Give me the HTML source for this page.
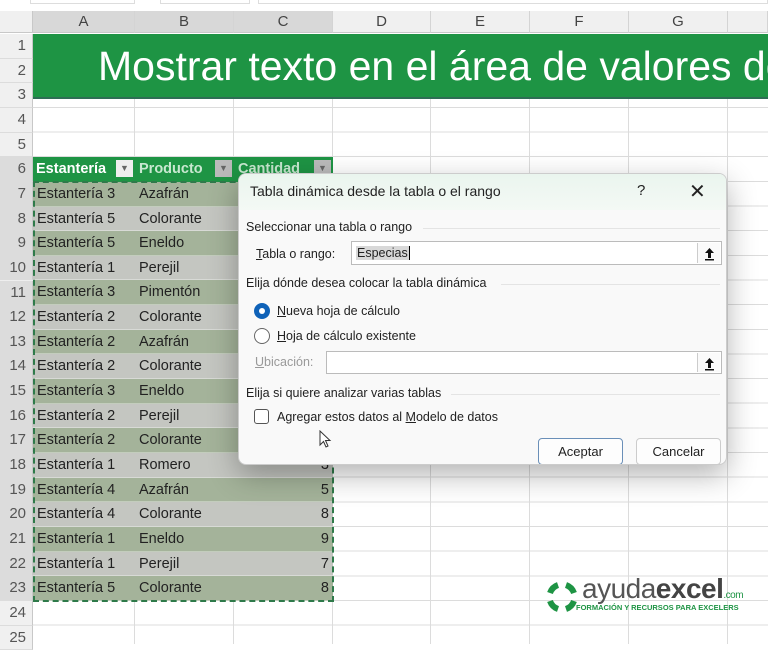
<!DOCTYPE html>
<html><head><meta charset="utf-8"><style>
*{margin:0;padding:0;box-sizing:border-box}
body{width:768px;height:637px;overflow:hidden;background:#fff;position:relative;font-family:"Liberation Sans",sans-serif}
.abs{position:absolute}
.grid{position:absolute;left:0;top:34px;width:768px;height:610px;
background-image:repeating-linear-gradient(to bottom,transparent 0,transparent 23.65px,#dcdcdc 23.65px,#dcdcdc 24.65px),
linear-gradient(to right,transparent 134px,#dcdcdc 134px,#dcdcdc 135px,transparent 135px,transparent 233px,#dcdcdc 233px,#dcdcdc 234px,transparent 234px,transparent 332px,#dcdcdc 332px,#dcdcdc 333px,transparent 333px,transparent 430px,#dcdcdc 430px,#dcdcdc 431px,transparent 431px,transparent 529px,#dcdcdc 529px,#dcdcdc 530px,transparent 530px,transparent 628px,#dcdcdc 628px,#dcdcdc 629px,transparent 629px,transparent 727px,#dcdcdc 727px,#dcdcdc 728px,transparent 728px)}
.colh{position:absolute;top:11px;height:22px;background:#f0f0f0;border-right:1px solid #d4d4d4;border-bottom:1px solid #c8c8c8;color:#444;font-size:15px;text-align:center;line-height:22px}
.rowh{position:absolute;left:0;width:33px;background:#f0f0f0;border-bottom:1px solid #dcdcdc;border-right:1px solid #c8c8c8;color:#555;font-size:15px;text-align:right;padding-right:6px;height:24.65px;line-height:24px}
.data{position:absolute;left:33px;top:181.9px;width:300px}
.r{height:24.65px;display:flex;font-size:14.5px;color:#222;line-height:24px;border-bottom:1px solid rgba(255,255,255,.35)}
.r.g{background:#a4b39a}.r.y{background:#c4c6c1}
.r span{display:block}
.r .a{width:102px;padding-left:4px}.r .b{width:99px;padding-left:4px}.r .c{width:99px;text-align:right;padding-right:4px}
.dlg{position:absolute;left:238px;top:173px;width:489px;height:292px;background:#f9f9f9;border:1px solid #ccc;border-radius:8px;box-shadow:0 10px 30px rgba(0,0,0,.3);font-size:13px;color:#222;overflow:hidden}
.sec{position:absolute;left:7px;font-size:12.5px;color:#222}
.line{position:absolute;height:1px;background:#e4e4e4;right:6px}
.box{position:absolute;background:#fff;border:1px solid #bbb}
.upb{position:absolute;right:1px;top:1px;bottom:1px;width:23px;border-left:1px solid #ccc;background:#fafafa}
.upb svg{position:absolute;left:6px;top:4px}
.btn{position:absolute;top:264px;width:85px;height:27px;border:1px solid #ccc;border-radius:4px;background:#fdfdfd;text-align:center;line-height:25px;font-size:13px}
u{text-decoration:underline}
</style></head><body>
<div class="abs" style="left:30px;top:0;width:105px;height:4px;border:1px solid #ddd;border-top:none"></div>
<div class="abs" style="left:160px;top:0;width:90px;height:4px;border:1px solid #ddd;border-top:none"></div>
<div class="abs" style="left:258px;top:0;width:510px;height:4px;border:1px solid #ddd;border-top:none"></div>
<div class="grid"></div>
<div class="abs" style="left:0;top:11px;width:33px;height:22px;background:#f0f0f0;border-right:1px solid #c8c8c8;border-bottom:1px solid #c8c8c8"></div>
<div class="colh" style="left:33px;width:102px;background:#d8d8d8">A</div>
<div class="colh" style="left:135px;width:99px;background:#d8d8d8">B</div>
<div class="colh" style="left:234px;width:99px;background:#d8d8d8">C</div>
<div class="colh" style="left:333px;width:98px">D</div>
<div class="colh" style="left:431px;width:99px">E</div>
<div class="colh" style="left:530px;width:99px">F</div>
<div class="colh" style="left:629px;width:99px">G</div>
<div class="colh" style="left:728px;width:40px"></div>
<div class="rowh" style="top:34px">1</div><div class="rowh" style="top:58.65px">2</div><div class="rowh" style="top:83.3px">3</div><div class="rowh" style="top:107.95px">4</div><div class="rowh" style="top:132.6px">5</div><div class="rowh" style="top:157.25px;background:#dcdcdc">6</div><div class="rowh" style="top:181.9px;background:#dcdcdc">7</div><div class="rowh" style="top:206.55px;background:#dcdcdc">8</div><div class="rowh" style="top:231.2px;background:#dcdcdc">9</div><div class="rowh" style="top:255.85px;background:#dcdcdc">10</div><div class="rowh" style="top:280.5px;background:#dcdcdc">11</div><div class="rowh" style="top:305.15px;background:#dcdcdc">12</div><div class="rowh" style="top:329.8px;background:#dcdcdc">13</div><div class="rowh" style="top:354.45px;background:#dcdcdc">14</div><div class="rowh" style="top:379.1px;background:#dcdcdc">15</div><div class="rowh" style="top:403.75px;background:#dcdcdc">16</div><div class="rowh" style="top:428.4px;background:#dcdcdc">17</div><div class="rowh" style="top:453.05px;background:#dcdcdc">18</div><div class="rowh" style="top:477.7px;background:#dcdcdc">19</div><div class="rowh" style="top:502.35px;background:#dcdcdc">20</div><div class="rowh" style="top:527px;background:#dcdcdc">21</div><div class="rowh" style="top:551.65px;background:#dcdcdc">22</div><div class="rowh" style="top:576.3px;background:#dcdcdc">23</div><div class="rowh" style="top:600.95px">24</div><div class="rowh" style="top:625.6px">25</div>
<div class="abs" style="left:33px;top:34px;width:735px;height:65px;background:#1e9444;border-bottom:2px solid #2e6e55;overflow:hidden;color:#fff;font-size:41px;white-space:nowrap;line-height:64px;padding-left:65px">Mostrar texto en el área de valores de</div>
<div class="abs" style="left:33px;top:157.25px;width:300px;height:24.65px;background:#1e9444;color:#fff;font-weight:bold;font-size:14.5px;line-height:24px;display:flex">
<span style="width:102px;padding-left:3px;position:relative">Estantería<i style="position:absolute;right:2px;top:3px;width:17px;height:17px;background:#eee;color:#666;font-size:9px;text-align:center;line-height:17px;font-style:normal">▼</i></span>
<span style="width:99px;padding-left:4px;position:relative;color:#c8e8d0">Producto<i style="position:absolute;right:2px;top:3px;width:17px;height:17px;background:#bbb;color:#666;font-size:9px;text-align:center;line-height:17px;font-style:normal">▼</i></span>
<span style="width:99px;padding-left:4px;position:relative;color:#c8e8d0">Cantidad<i style="position:absolute;right:2px;top:3px;width:17px;height:17px;background:#bbb;color:#666;font-size:9px;text-align:center;line-height:17px;font-style:normal">▼</i></span></div>
<div class="data">
<div class="r g"><span class="a">Estantería 3</span><span class="b">Azafrán</span><span class="c"></span></div>
<div class="r y"><span class="a">Estantería 5</span><span class="b">Colorante</span><span class="c"></span></div>
<div class="r g"><span class="a">Estantería 5</span><span class="b">Eneldo</span><span class="c"></span></div>
<div class="r y"><span class="a">Estantería 1</span><span class="b">Perejil</span><span class="c"></span></div>
<div class="r g"><span class="a">Estantería 3</span><span class="b">Pimentón</span><span class="c"></span></div>
<div class="r y"><span class="a">Estantería 2</span><span class="b">Colorante</span><span class="c"></span></div>
<div class="r g"><span class="a">Estantería 2</span><span class="b">Azafrán</span><span class="c"></span></div>
<div class="r y"><span class="a">Estantería 2</span><span class="b">Colorante</span><span class="c"></span></div>
<div class="r g"><span class="a">Estantería 3</span><span class="b">Eneldo</span><span class="c"></span></div>
<div class="r y"><span class="a">Estantería 2</span><span class="b">Perejil</span><span class="c"></span></div>
<div class="r g"><span class="a">Estantería 2</span><span class="b">Colorante</span><span class="c"></span></div>
<div class="r y"><span class="a">Estantería 1</span><span class="b">Romero</span><span class="c">3</span></div>
<div class="r g"><span class="a">Estantería 4</span><span class="b">Azafrán</span><span class="c">5</span></div>
<div class="r y"><span class="a">Estantería 4</span><span class="b">Colorante</span><span class="c">8</span></div>
<div class="r g"><span class="a">Estantería 1</span><span class="b">Eneldo</span><span class="c">9</span></div>
<div class="r y"><span class="a">Estantería 1</span><span class="b">Perejil</span><span class="c">7</span></div>
<div class="r g"><span class="a">Estantería 5</span><span class="b">Colorante</span><span class="c">8</span></div>
</div>
<div class="abs" style="left:33px;top:181px;width:301px;height:421px;border:2px dashed #2f7a4a"></div>

<div class="dlg">
<div class="abs" style="left:0;top:0;right:0;height:36px;background:linear-gradient(#eaf5ee,#f4f9f5)"></div>
<div class="abs" style="left:11px;top:9px;font-size:14px">Tabla dinámica desde la tabla o el rango</div>
<div class="abs" style="left:398px;top:8px;font-size:15px">?</div>
<div class="abs" style="left:450px;top:5px;font-size:20px;font-weight:300">✕</div>
<div class="sec" style="top:46px">Seleccionar una tabla o rango</div><div class="line" style="left:184px;top:54px"></div>
<div class="abs" style="left:17px;top:73px;font-size:12.5px"><u>T</u>abla o rango:</div>
<div class="box" style="left:112px;top:67px;width:371px;height:24px"><span class="abs" style="left:4px;top:4px;background:#d8d8d8;font-size:12.5px;padding:0 1px;border-right:1px solid #000">Especias</span><div class="upb"><svg width="11" height="14" viewBox="0 0 11 14"><path d="M5.5 1 L1 6 H4 V11 H7 V6 H10 Z" fill="#111"/><rect x="1" y="12" width="9" height="1.5" fill="#111"/></svg></div></div>
<div class="sec" style="top:102px">Elija dónde desea colocar la tabla dinámica</div><div class="line" style="left:262px;top:110px"></div>
<div class="abs" style="left:15px;top:129px;width:16px;height:16px;border-radius:50%;background:#0f62b8"><div class="abs" style="left:5px;top:5px;width:6px;height:6px;border-radius:50%;background:#fff"></div></div>
<div class="abs" style="left:38px;top:130px;font-size:12.5px"><u>N</u>ueva hoja de cálculo</div>
<div class="abs" style="left:15px;top:154px;width:16px;height:16px;border-radius:50%;border:1px solid #666;background:#fff"></div>
<div class="abs" style="left:38px;top:155px;font-size:12.5px"><u>H</u>oja de cálculo existente</div>
<div class="abs" style="left:16px;top:181px;font-size:12.5px;color:#999"><u>U</u>bicación:</div>
<div class="box" style="left:87px;top:177px;width:396px;height:23px"><div class="upb"><svg width="11" height="14" viewBox="0 0 11 14"><path d="M5.5 1 L1 6 H4 V11 H7 V6 H10 Z" fill="#111"/><rect x="1" y="12" width="9" height="1.5" fill="#111"/></svg></div></div>
<div class="sec" style="top:212px">Elija si quiere analizar varias tablas</div><div class="line" style="left:212px;top:220px"></div>
<div class="abs" style="left:15px;top:235px;width:15px;height:15px;border:1px solid #555;border-radius:3px;background:#fff"></div>
<div class="abs" style="left:38px;top:236px;font-size:12.5px">Agregar estos datos al <u>M</u>odelo de datos</div>
<svg class="abs" style="left:80px;top:256px" width="14" height="20"><path d="M1 1 L1 15 L4.5 11.5 L7 17 L9 16 L6.5 10.5 L11 10.5 Z" fill="#fff" stroke="#333" stroke-width="1"/></svg>
<div class="btn" style="left:299px;border:1px solid #6a8fb8">Aceptar</div>
<div class="btn" style="left:397px">Cancelar</div>
</div>

<svg class="abs" style="left:545px;top:580px" width="34" height="34" viewBox="0 0 34 34"><g fill="none" stroke="#1e9444" stroke-width="6"><path d="M5 13 A13 13 0 0 1 13 5"/><path d="M21 5 A13 13 0 0 1 29 13"/><path d="M29 21 A13 13 0 0 1 21 29"/><path d="M13 29 A13 13 0 0 1 5 21"/></g></svg>
<div class="abs" style="left:582px;top:573px;font-size:28px;color:#555;letter-spacing:-0.5px;white-space:nowrap"><span style="font-weight:300">ayuda</span><b style="color:#444">excel</b><span style="font-size:10px;color:#1e9444">.com</span></div>
<div class="abs" style="left:576px;top:603px;font-size:7.5px;color:#1e9444;font-weight:bold;white-space:nowrap">FORMACIÓN Y RECURSOS PARA EXCELERS</div>
</body></html>
